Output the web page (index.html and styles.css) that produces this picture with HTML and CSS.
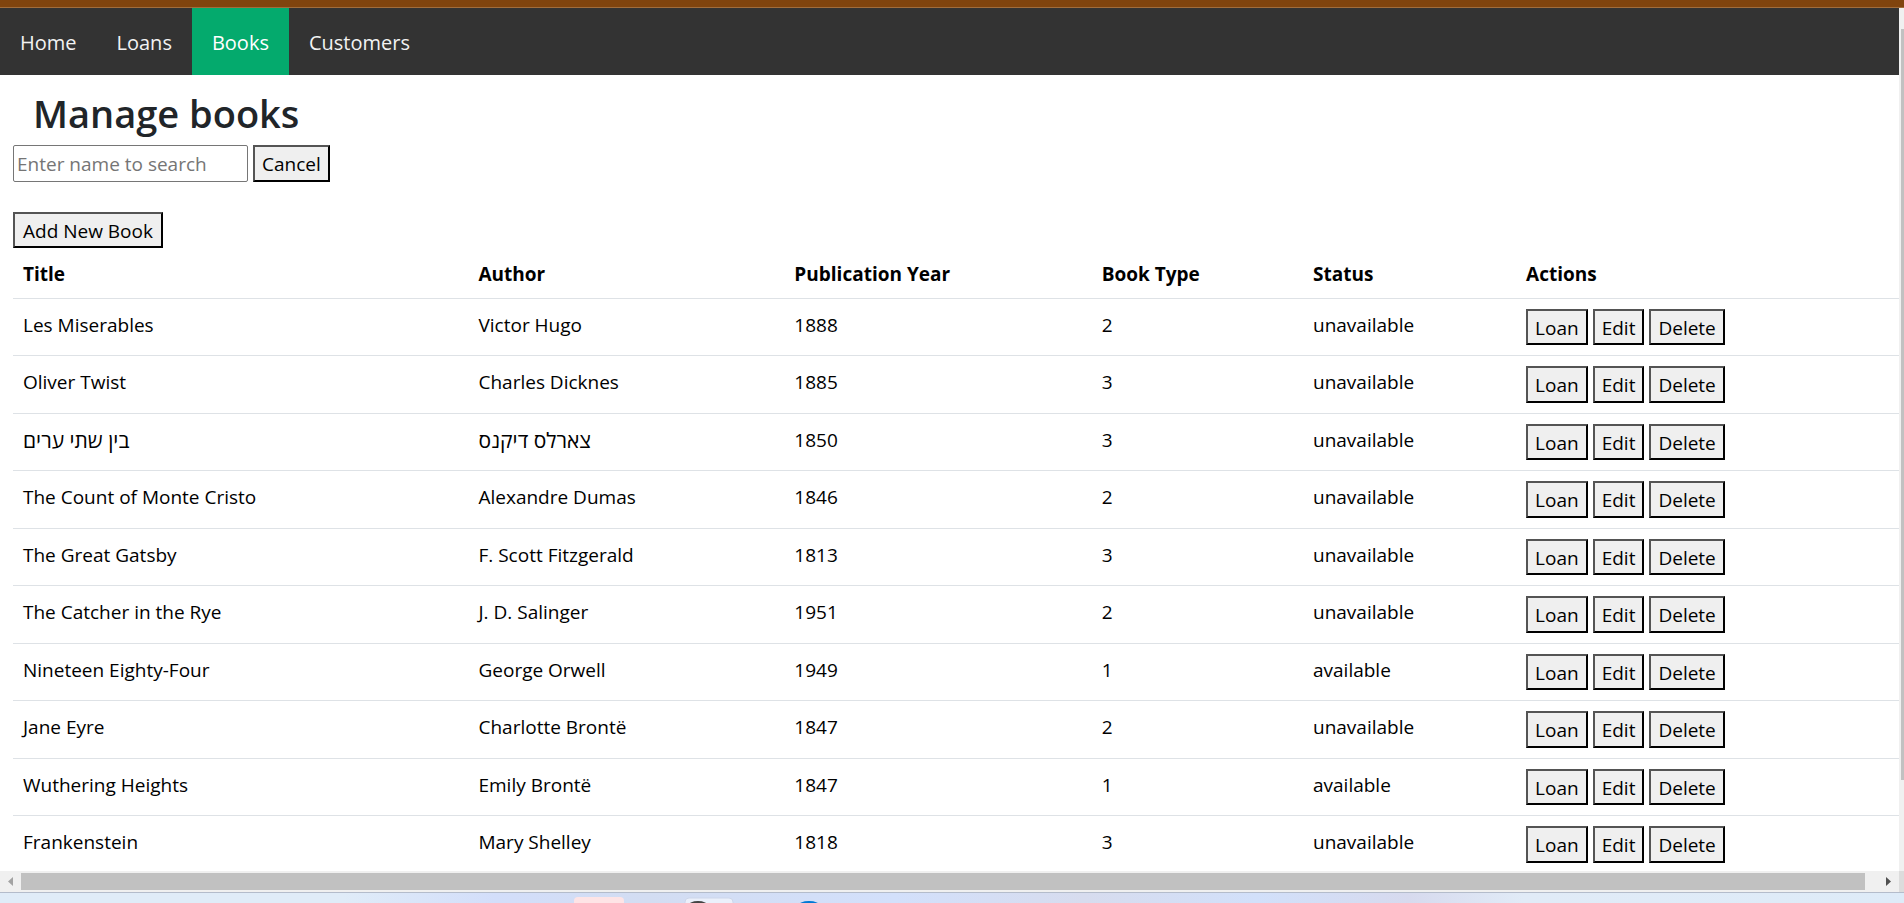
FILE: index.html
```html
<!DOCTYPE html>
<html lang="en">
<head>
<meta charset="utf-8">
<title>Manage books</title>
<link rel="stylesheet" href="styles.css">
</head>
<body>
<div class="frame-top"></div>
<div class="viewport">
  <div class="page">
    <nav class="navbar">
      <a href="#">Home</a>
      <a href="#">Loans</a>
      <a href="#" class="active">Books</a>
      <a href="#">Customers</a>
    </nav>
    <main class="content">
      <h1>Manage books</h1>
      <div class="search">
        <input type="text" aria-label="Search by name" placeholder="Enter name to search">
        <button type="button">Cancel</button>
      </div>
      <button type="button" class="add">Add New Book</button>
      <table class="books">
        <colgroup><col class="c-title"><col class="c-author"><col class="c-year"><col class="c-type"><col class="c-status"><col></colgroup>
        <thead>
          <tr><th>Title</th><th>Author</th><th>Publication Year</th><th>Book Type</th><th>Status</th><th>Actions</th></tr>
        </thead>
        <tbody>
          <tr><td>Les Miserables</td><td>Victor Hugo</td><td>1888</td><td>2</td><td>unavailable</td><td class="action-cell"><div class="actions"><button type="button">Loan</button><button type="button">Edit</button><button type="button">Delete</button></div></td></tr>
          <tr><td>Oliver Twist</td><td>Charles Dicknes</td><td>1885</td><td>3</td><td>unavailable</td><td class="action-cell"><div class="actions"><button type="button">Loan</button><button type="button">Edit</button><button type="button">Delete</button></div></td></tr>
          <tr><td lang="he">בין שתי ערים</td><td lang="he">צארלס דיקנס</td><td>1850</td><td>3</td><td>unavailable</td><td class="action-cell"><div class="actions"><button type="button">Loan</button><button type="button">Edit</button><button type="button">Delete</button></div></td></tr>
          <tr><td>The Count of Monte Cristo</td><td>Alexandre Dumas</td><td>1846</td><td>2</td><td>unavailable</td><td class="action-cell"><div class="actions"><button type="button">Loan</button><button type="button">Edit</button><button type="button">Delete</button></div></td></tr>
          <tr><td>The Great Gatsby</td><td>F. Scott Fitzgerald</td><td>1813</td><td>3</td><td>unavailable</td><td class="action-cell"><div class="actions"><button type="button">Loan</button><button type="button">Edit</button><button type="button">Delete</button></div></td></tr>
          <tr><td>The Catcher in the Rye</td><td>J. D. Salinger</td><td>1951</td><td>2</td><td>unavailable</td><td class="action-cell"><div class="actions"><button type="button">Loan</button><button type="button">Edit</button><button type="button">Delete</button></div></td></tr>
          <tr><td>Nineteen Eighty-Four</td><td>George Orwell</td><td>1949</td><td>1</td><td>available</td><td class="action-cell"><div class="actions"><button type="button">Loan</button><button type="button">Edit</button><button type="button">Delete</button></div></td></tr>
          <tr><td>Jane Eyre</td><td>Charlotte Brontë</td><td>1847</td><td>2</td><td>unavailable</td><td class="action-cell"><div class="actions"><button type="button">Loan</button><button type="button">Edit</button><button type="button">Delete</button></div></td></tr>
          <tr><td>Wuthering Heights</td><td>Emily Brontë</td><td>1847</td><td>1</td><td>available</td><td class="action-cell"><div class="actions"><button type="button">Loan</button><button type="button">Edit</button><button type="button">Delete</button></div></td></tr>
          <tr><td>Frankenstein</td><td>Mary Shelley</td><td>1818</td><td>3</td><td>unavailable</td><td class="action-cell"><div class="actions"><button type="button">Loan</button><button type="button">Edit</button><button type="button">Delete</button></div></td></tr>
        </tbody>
      </table>
    </main>
  </div>
  <div class="scroll-y"><div class="thumb-y"></div></div>
</div>
<div class="scroll-x">
  <svg class="arrow" viewBox="0 0 21 21"><path d="M13 6v9L8 10.500z" fill="#a3a3a3"/></svg>
  <div class="thumb-x"></div>
  <svg class="arrow arrow-end" viewBox="0 0 21 21"><path d="M8 6v9l5-4.500z" fill="#505050"/></svg>
  <div class="corner"></div>
</div>
<div class="taskbar">
  <svg width="260" height="10" viewBox="0 0 260 10">
    <rect x="0" y="4" width="50" height="20" rx="4" fill="#fee4e6"/>
    <rect x="111" y="5" width="48" height="20" rx="4" fill="#ebf0fb" stroke="#cdd6ea" stroke-width="1"/>
    <ellipse cx="124" cy="13" rx="10" ry="5" fill="#444"/>
    <ellipse cx="235" cy="13" rx="11" ry="5" fill="#0078d4"/>
  </svg>
</div>
</body>
</html>
```

FILE: styles.css
```css
* {
  box-sizing: border-box;
}

body {
  margin: 0;
  height: 100vh;
  display: flex;
  flex-direction: column;
  overflow: hidden;
  background: #fff;
  color: #000;
  font-family: "Open Sans", "Noto Sans", sans-serif;
  font-size: 19px;
  line-height: 1.5;
}

.frame-top {
  flex: none;
  height: 8px;
  background: #80440e;
  border-bottom: 1px solid #a16d3c;
}

.viewport {
  flex: 1;
  min-height: 0;
  display: flex;
}

.page {
  flex: 1;
  min-width: 0;
  overflow: hidden;
}

.navbar {
  display: flex;
  background: #333;
}

.navbar a {
  padding: 19px 20px 16px;
  font-size: 20px;
  line-height: 32px;
  color: #f2f2f2;
  text-decoration: none;
}

.navbar a.active {
  background: #04aa6d;
  color: #fff;
}

.content {
  padding: 14px 0 0 13px;
}

h1 {
  margin: 0 0 8px 20px;
  font-size: 38px;
  font-weight: 600;
  line-height: 48px;
  color: #212529;
}

.search {
  display: flex;
  gap: 5px;
  margin-bottom: 30px;
}

input {
  width: 235px;
  padding: 3px 3px 1px;
  border: 1px solid #767676;
  border-radius: 2px;
  font: inherit;
}

input::placeholder {
  color: #757575;
}

button {
  display: block;
  padding: 3px 7px 1px;
  border: 2px outset #000;
  border-radius: 0;
  background: #efefef;
  color: #000;
  font: inherit;
}

.add {
  padding-left: 8px;
  padding-right: 8px;
}

.books {
  width: 100%;
  table-layout: fixed;
  border-spacing: 0;
}

.c-title { width: 24.15%; }
.c-author { width: 16.75%; }
.c-year { width: 16.3%; }
.c-type { width: 11.2%; }
.c-status { width: 11.3%; }

th,
td {
  padding: 12px 10px 9px;
  border-bottom: 1px solid #dee2e6;
  text-align: left;
  vertical-align: top;
}

th {
  font-weight: 700;
}

td:lang(he) {
  font-size: 21px;
  line-height: 28px;
}

.action-cell {
  padding: 10px;
}

.actions {
  display: flex;
  gap: 5px;
}

.scroll-y {
  flex: none;
  width: 5px;
  padding: 21px 0 91px 2px;
  background: #f0f0f0;
}

.thumb-y {
  height: 100%;
  background: #c1c1c1;
}

.scroll-x {
  flex: none;
  display: flex;
  align-items: center;
  height: 21px;
  background: #f0f0f0;
}

.arrow {
  flex: none;
  width: 21px;
  height: 21px;
}

.arrow-end {
  margin-left: 13px;
}

.thumb-x {
  flex: 1;
  height: 17px;
  background: #c1c1c1;
}

.corner {
  width: 5px;
  height: 21px;
  background: #dcdcdc;
}

.taskbar {
  flex: none;
  height: 11px;
  padding-left: 574px;
  overflow: hidden;
  border-top: 1px solid #b4bccb;
  background: linear-gradient(90deg, #e0ecf8 0, #e0ecf8 18%, #d3defa 26%, #d3ddf2 34%, #d3e0fb 47%, #d7dcee 57%, #d2e0fa 66%, #d7daee 74%, #e1ebf7 80%, #deebf8 100%);
}

.taskbar svg {
  display: block;
}
```
